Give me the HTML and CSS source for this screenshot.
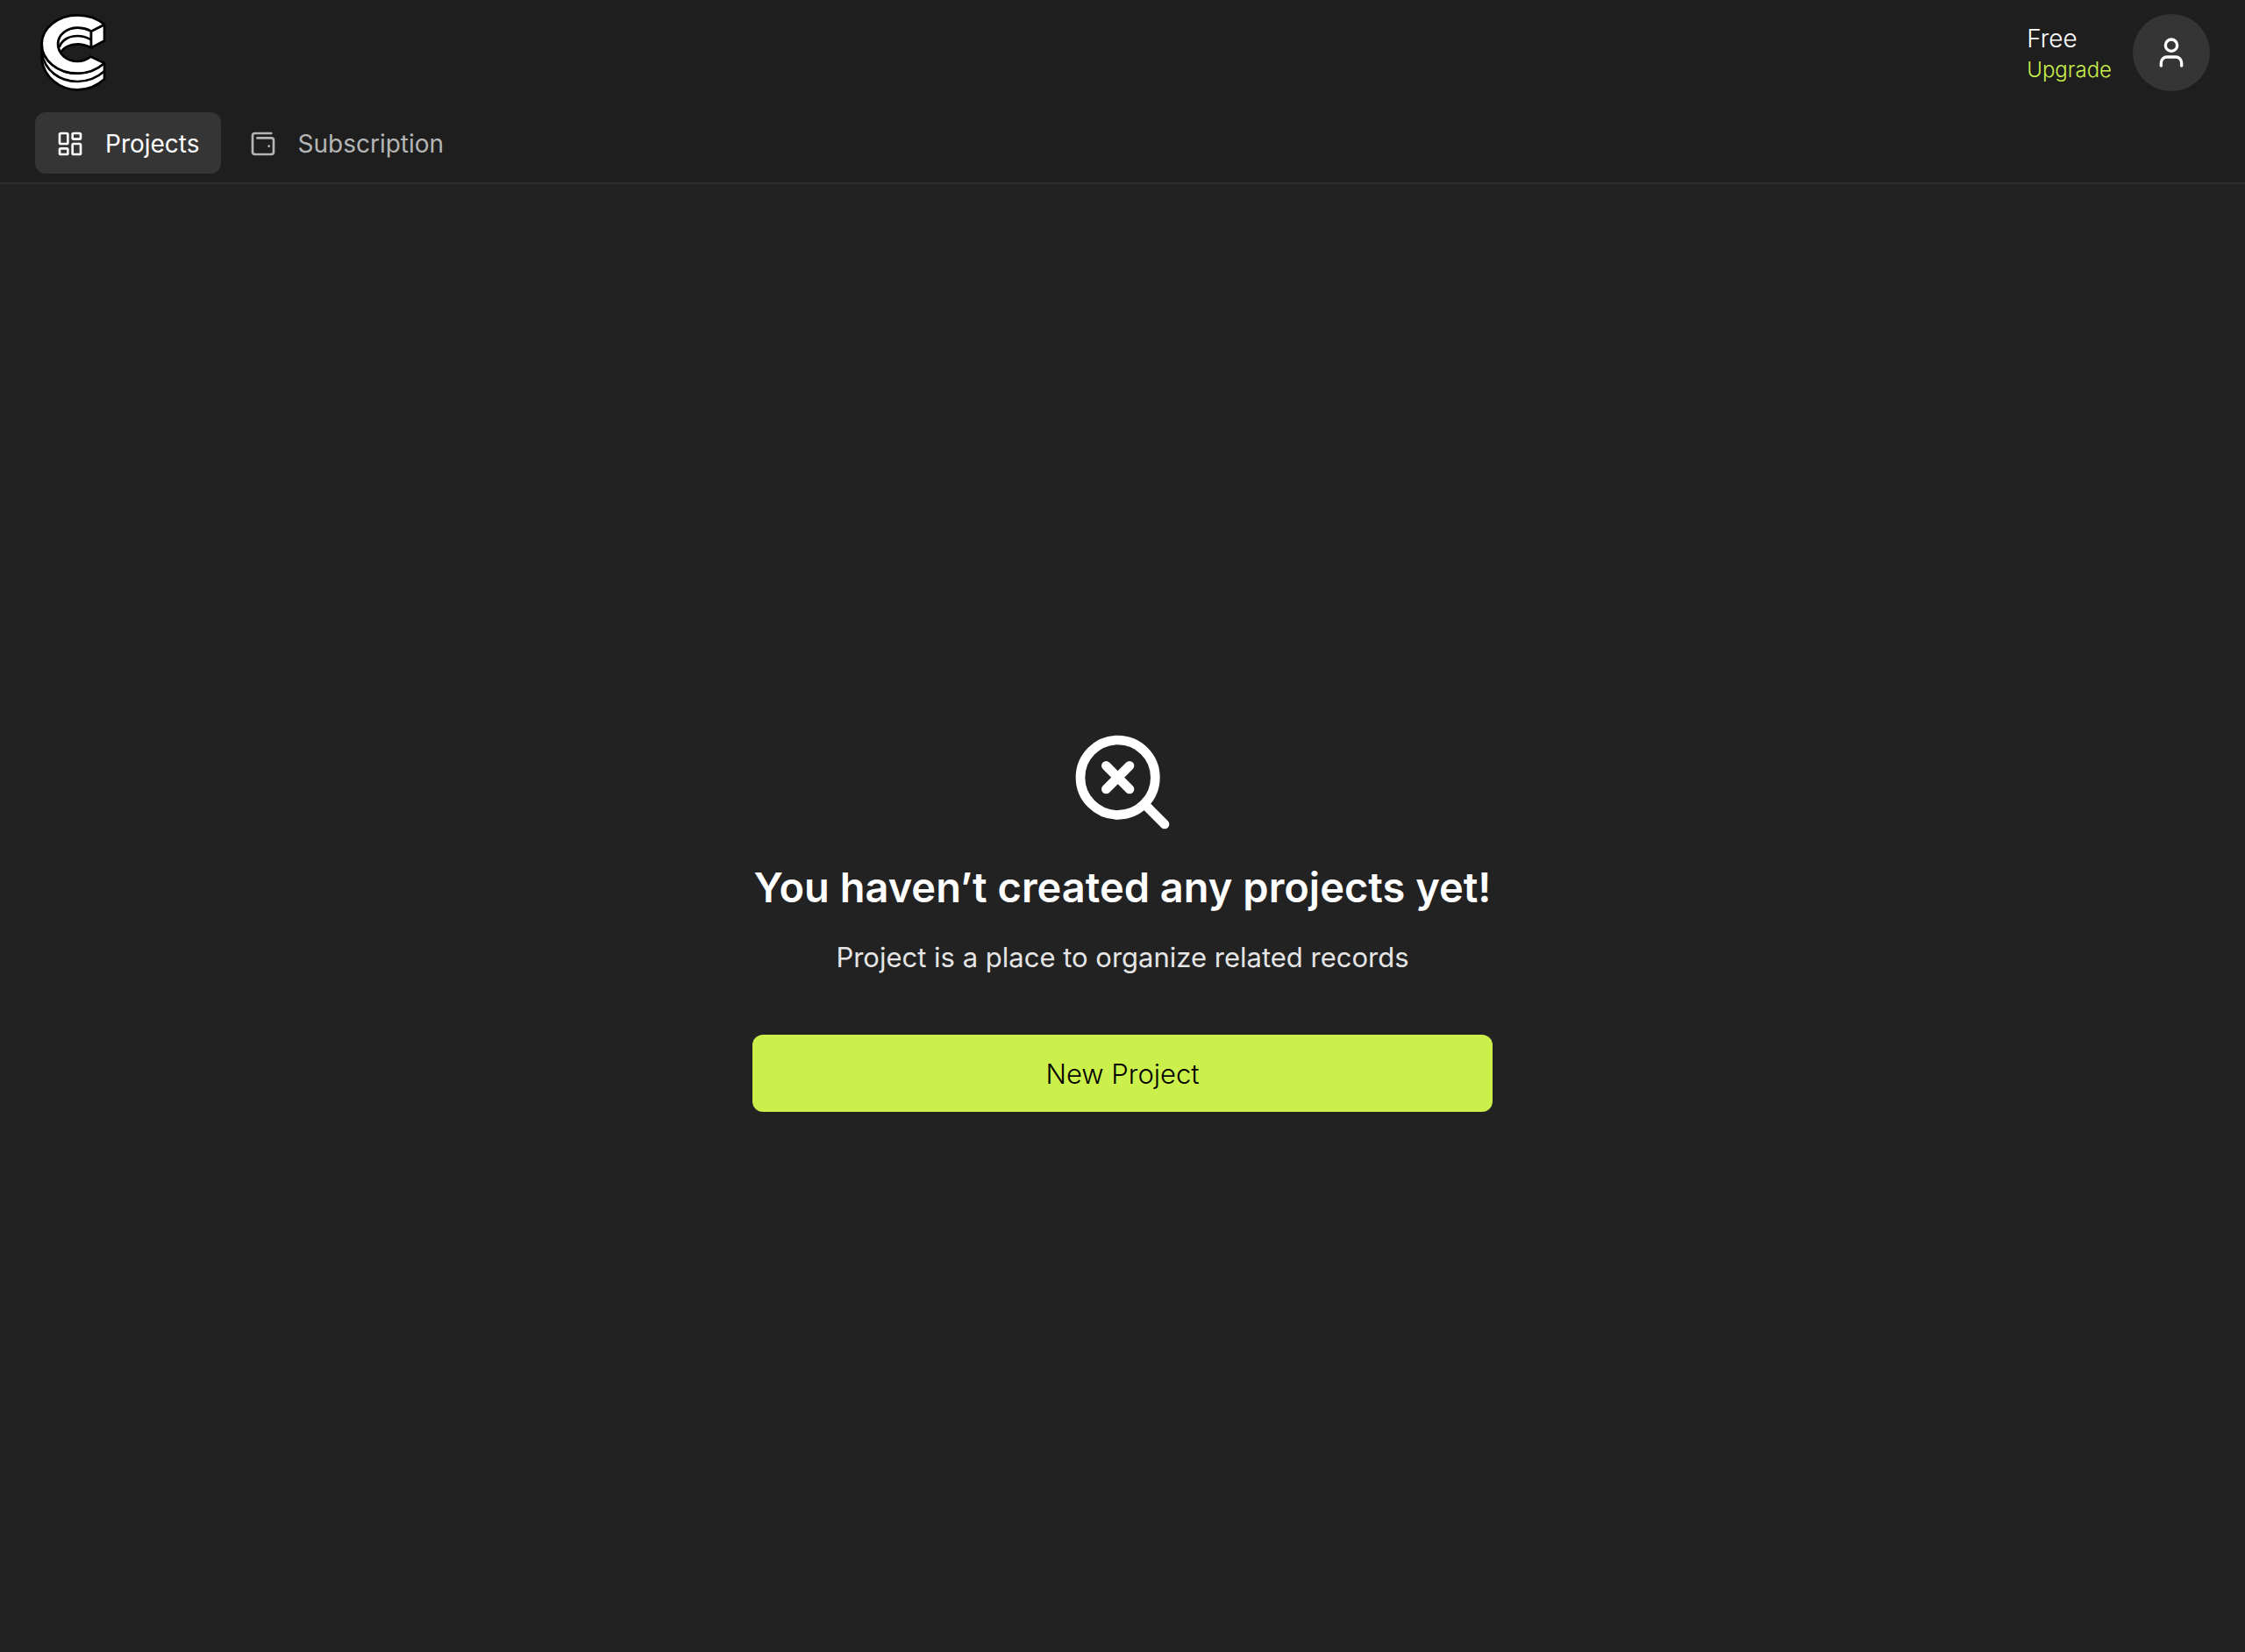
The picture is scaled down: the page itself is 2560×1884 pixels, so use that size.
FILE: index.html
```html
<!DOCTYPE html>
<html lang="en">
<head>
<meta charset="utf-8">
<title>Projects</title>
<link rel="stylesheet" href="styles.css">
</head>
<body>
<header class="header">
  <div class="topbar">
    <a class="logo" href="#" aria-label="Home">
      <svg viewBox="30 48 264 264" width="88" height="88" fill="#fff" stroke="#000" stroke-width="8" stroke-linejoin="round">
        <path d="M53 150V206C62 262 112 307 175 307C212 307 243 293 267 271V216C243 237 212 251 175 251C108 251 53 207 53 150Z"/>
        <path d="M222 107C207 98 192 95 175 95C138 95 108 119 108 150C108 163 112 172 118 180C126 164 148 151 175 151C192 151 207 156 222 163Z"/>
        <path fill="none" d="M113 162C120 138 145 123 175 123C192 123 207 128 222 136"/>
        <path d="M222 107L267 84V139L222 163Z"/>
        <path d="M267 84C243 63 212 52 175 52C108 52 53 96 53 150C53 207 108 251 175 251C212 251 243 237 267 216L220 194C207 204 192 210 175 210C138 210 108 184 108 150C108 119 138 95 175 95C192 95 207 98 222 107Z"/>
        <path fill="none" d="M53 184C64 240 112 279 175 279C212 279 243 265 267 244"/>
      </svg>
    </a>
    <div class="account">
      <div class="plan">
        <span class="plan-name">Free</span>
        <a class="upgrade" href="#">Upgrade</a>
      </div>
      <button class="avatar" type="button" aria-label="Account">
        <svg viewBox="0 0 24 24" width="40" height="40" fill="none" stroke="currentColor" stroke-width="2" stroke-linecap="round" stroke-linejoin="round"><circle cx="12" cy="7" r="4"/><path d="M19 21v-2a4 4 0 0 0-4-4H9a4 4 0 0 0-4 4v2"/></svg>
      </button>
    </div>
  </div>
  <nav class="tabs">
    <a class="tab tab-active" href="#">
      <svg viewBox="0 0 24 24" width="32" height="32" fill="none" stroke="currentColor" stroke-width="2"><rect x="3" y="3" width="7" height="9" rx="1"/><rect x="14" y="3" width="7" height="5" rx="1"/><rect x="14" y="12" width="7" height="9" rx="1"/><rect x="3" y="16" width="7" height="5" rx="1"/></svg>
      Projects
    </a>
    <a class="tab" href="#">
      <svg viewBox="0 0 24 24" width="32" height="32" fill="none" stroke="currentColor" stroke-width="2" stroke-linecap="round" stroke-linejoin="round"><path d="M17 14h.01"/><path d="M7 7h12a2 2 0 0 1 2 2v10a2 2 0 0 1-2 2H5a2 2 0 0 1-2-2V5a2 2 0 0 1 2-2h14"/></svg>
      Subscription
    </a>
  </nav>
</header>
<main class="main">
  <section class="empty">
    <svg class="empty-icon" viewBox="0 0 24 24" width="128" height="128" fill="none" stroke="currentColor" stroke-width="2" stroke-linecap="round" stroke-linejoin="round"><path d="m13.500 8.500-5 5M8.500 8.500l5 5"/><circle cx="11" cy="11" r="8"/><path d="m21 21-4.300-4.300"/></svg>
    <h1 class="title">You haven’t created any projects yet!</h1>
    <p class="subtitle">Project is a place to organize related records</p>
    <button class="primary" type="button">New Project</button>
  </section>
</main>
</body>
</html>
```
FILE: styles.css
```css
* { box-sizing: border-box; }
body {
  margin: 0;
  min-height: 100vh;
  display: flex;
  flex-direction: column;
  background: #222;
  color: #fff;
  font-family: Inter, "Liberation Sans", sans-serif;
}
svg { display: block; flex: none; }
a { color: inherit; text-decoration: none; }
button { border: 0; font: inherit; cursor: pointer; }

.header {
  background: #1e1e1e;
  border-bottom: 2px solid #2d2d2d;
  padding: 16px 40px 10px;
}
.topbar { display: flex; justify-content: space-between; align-items: center; }
.account { display: flex; align-items: center; gap: 24px; }
.plan { display: flex; flex-direction: column; }
.plan-name { font-size: 28px; line-height: 40px; font-weight: 300; }
.upgrade { font-size: 24px; line-height: 32px; font-weight: 300; color: #cbf04c; }
.avatar {
  width: 88px;
  height: 88px;
  padding: 0;
  display: grid;
  place-items: center;
  border-radius: 50%;
  background: #353535;
  color: #fff;
}
.tabs { display: flex; gap: 8px; margin-top: 24px; }
.tab {
  display: flex;
  align-items: center;
  gap: 24px;
  height: 70px;
  padding: 2px 24px 0;
  border-radius: 12px;
  font-size: 28px;
  font-weight: 400;
  color: #b5b5b5;
}
.tab-active { background: #353535; color: #fff; }

.main { flex: 1; display: grid; place-items: center; padding-top: 2px; }
.empty {
  width: 844px;
  max-width: 100%;
  display: flex;
  flex-direction: column;
  align-items: center;
  text-align: center;
}
.title { margin: 24px 0 0; font-size: 47px; line-height: 64px; font-weight: 600; white-space: nowrap; }
.subtitle { margin: 26px 0 0; font-size: 31px; line-height: 44px; font-weight: 400; color: #e5e5e5; }
.primary {
  width: 100%;
  height: 88px;
  margin-top: 66px;
  border-radius: 12px;
  background: #cbf04c;
  color: #000;
  font-size: 31px;
  font-weight: 300;
}
```
